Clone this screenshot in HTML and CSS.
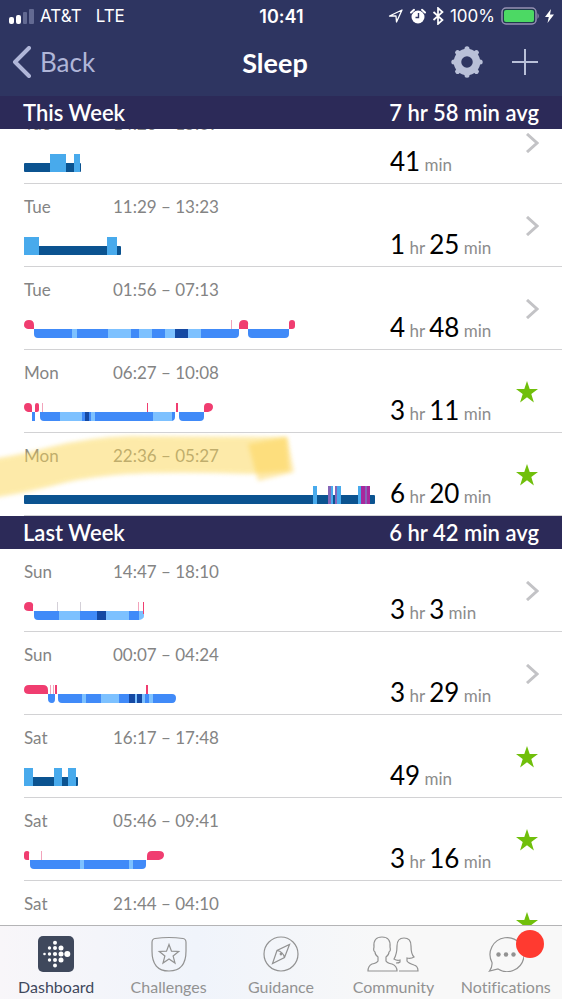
FILE: index.html
```html
<!DOCTYPE html>
<html lang="en">
<head>
    <meta charset="UTF-8">
    <meta name="viewport" content="width=device-width, initial-scale=1.0">
    <title>Sleep</title>
    <link rel="stylesheet" href="styles.css">
</head>
<body>

    <header class="top">
        <div class="status-bar">
            <div class="status-left">
                <svg class="signal" width="25" height="15" viewBox="0 0 25 15">
                    <rect x="0" y="8" width="5" height="7" rx="2"/>
                    <rect x="7" y="6" width="5" height="9" rx="2"/>
                    <rect class="off" x="14" y="3" width="4" height="12" rx="1"/>
                    <rect class="off" x="20" y="0" width="5" height="15" rx="1"/>
                </svg>
                <span>AT&amp;T</span>
                <span class="network">LTE</span>
            </div>
            <div class="clock">10:41</div>
            <div class="status-right">
                <svg width="16" height="16" viewBox="0 0 16 16"><path d="M1.500 8 14 2 8.500 14 8 8z" fill="none" stroke="#fff" stroke-width="1.300" stroke-linejoin="round"/></svg>
                <svg class="alarm" width="16" height="16" viewBox="0 0 16 16">
                    <circle cx="8" cy="9" r="6.500" fill="#fff"/>
                    <path d="M1 4.500 4 1.800M15 4.500 12 1.800" stroke="#fff" stroke-width="2" stroke-linecap="round"/>
                    <path d="M8.500 5V9.500H5.500" fill="none" stroke="#2e3561" stroke-width="1.400"/>
                </svg>
                <svg width="12" height="18" viewBox="0 0 12 18"><path d="M1.500 5 10.500 13 6 17V1l4.500 4-9 8" fill="none" stroke="#fff" stroke-width="1.700"/></svg>
                <span>100%</span>
                <svg class="battery" width="38" height="18" viewBox="0 0 38 18">
                    <rect x="1" y="1" width="34" height="16" rx="4" fill="#1f3a4d" stroke="#9690b4" stroke-width="1.500"/>
                    <rect x="3" y="3" width="30" height="12" rx="2" fill="#4cd964"/>
                    <path d="M36.500 6q2.500 3 0 6z" fill="#9690b4"/>
                </svg>
                <svg width="9" height="14" viewBox="0 0 9 14"><path d="M6 0 0 8h3.800L2.500 14 9 5.500H5z" fill="#fff"/></svg>
            </div>
        </div>
        <nav class="nav-bar">
            <a class="back" href="#">
                <svg width="20" height="32" viewBox="0 0 20 32"><path d="M18 2 4 16 18 30" fill="none" stroke="currentColor" stroke-width="4" stroke-linecap="round" stroke-linejoin="round"/></svg>
                Back
            </a>
            <h1>Sleep</h1>
            <div class="actions">
                <button type="button" aria-label="Settings">
                    <svg width="32" height="32" viewBox="0 0 32 32">
                        <circle cx="16" cy="16" r="9.500" fill="none" stroke="currentColor" stroke-width="7.500"/>
                        <g stroke="currentColor" stroke-width="5" stroke-linecap="round">
                            <path d="M16 4V2.800M16 28v1.200M4 16H2.800M28 16h1.200M7.500 7.500l-.900-.900M24.500 24.500l.9.9M7.500 24.500l-.9.9M24.500 7.500l.9-.9"/>
                        </g>
                    </svg>
                </button>
                <button type="button" aria-label="Add">
                    <svg width="28" height="28" viewBox="0 0 28 28"><path d="M14 1v26M1 14h26" stroke="currentColor" stroke-width="2"/></svg>
                </button>
            </div>
        </nav>
    </header>

    <main class="log">
        <h2 class="week pinned"><span>This Week</span><span>7 hr 58 min avg</span></h2>
        <ul class="sessions scrolled">
            <li class="session">
                <a href="#">
                    <span class="day">Tue</span>
                    <span class="time">14:26 – 15:09</span>
                    <svg class="chart" width="351" height="18" viewBox="0 0 351 18">
                        <rect class="asleep" y="9" width="57" height="9" rx="1"/>
                        <path class="restless" d="M26 0h16v18H26zM50 0h6v18h-6z"/>
                    </svg>
                    <span class="duration"><b>41</b> min</span>
                    <svg class="arrow" width="14" height="20" viewBox="0 0 14 20"><path d="M2 1 12 10 2 19"/></svg>
                </a>
            </li>
            <li class="session">
                <a href="#">
                    <span class="day">Tue</span>
                    <span class="time">11:29 – 13:23</span>
                    <svg class="chart" width="351" height="18" viewBox="0 0 351 18">
                        <rect class="asleep" y="9" width="97" height="9" rx="1"/>
                        <path class="restless" d="M0 0h15v18H0zM83 0h10v18H83z"/>
                    </svg>
                    <span class="duration"><b>1</b> hr <b>25</b> min</span>
                    <svg class="arrow" width="14" height="20" viewBox="0 0 14 20"><path d="M2 1 12 10 2 19"/></svg>
                </a>
            </li>
            <li class="session">
                <a href="#">
                    <span class="day">Tue</span>
                    <span class="time">01:56 – 07:13</span>
                    <svg class="chart" width="351" height="18" viewBox="0 0 351 18">
                        <path class="light" d="M10 9h205v5q0 4-4 4H14q-4 0-4-4zM224 9h41v5q0 4-4 4h-33q-4 0-4-4z"/>
                        <path class="rem" d="M48 9h5v9h-5zM84 9h23v9H84zM115 9h13v9h-13zM141 9h36v9h-36z"/>
                        <path class="deep" d="M151 9h13v9h-13z"/>
                        <path class="wake" d="M10 9H4Q0 8 0 5q0-5 5-5t5 5zM215 9V5q0-5 5-5t4 5v4zM265 9V3q0-3 3-3t3 3v3q0 3-3 3z"/>
                        <path class="blip" d="M207 0h1v9h-1z"/>
                    </svg>
                    <span class="duration"><b>4</b> hr <b>48</b> min</span>
                    <svg class="arrow" width="14" height="20" viewBox="0 0 14 20"><path d="M2 1 12 10 2 19"/></svg>
                </a>
            </li>
            <li class="session">
                <a href="#">
                    <span class="day">Mon</span>
                    <span class="time">06:27 – 10:08</span>
                    <svg class="chart" width="351" height="18" viewBox="0 0 351 18">
                        <path class="light" d="M8 9h3v9H8zM16 9h135v5q0 4-4 4H20q-4 0-4-4zM155 9h25v5q0 4-4 4h-17q-4 0-4-4z"/>
                        <path class="rem" d="M36 9h35v9H36zM129 9h19v9h-19z"/>
                        <path class="light" d="M58 9h9v9h-9z"/>
                        <path class="deep" d="M61 9h4v9h-4z"/>
                        <path class="wake" d="M8 9H4Q0 8 0 4t4-4 4 4zM11 9V2q0-2 2-2t2 2v5q0 2-2 2zM152 0h2v9h-2zM180 9V4q0-4 4-4 5 0 5 4t-5 5zM123 0h1v9h-1z"/>
                        <path class="blip" d="M18 0h1v9h-1z"/>
                    </svg>
                    <span class="duration"><b>3</b> hr <b>11</b> min</span>
                    <svg class="star" width="24" height="24" viewBox="0 0 24 24"><path d="m12 1 2.700 8H23l-6.700 5 2.600 8.500-6.900-5.200-6.900 5.200L7.700 14 1 9h8.300z"/></svg>
                </a>
            </li>
            <li class="session">
                <a href="#">
                    <span class="day">Mon</span>
                    <span class="time">22:36 – 05:27</span>
                    <svg class="chart" width="351" height="18" viewBox="0 0 351 18">
                        <rect class="asleep" y="9" width="351" height="9" rx="1"/>
                        <path class="restless" d="M289 0h4v18h-4zM304 0h5v18h-5zM311 0h6v18h-6zM334 0h12v18h-12z"/>
                        <path class="mixed" d="M304 0h3v18h-3zM311 0h2v18h-2zM341 0h2v18h-2z"/>
                        <path class="awake" d="M337 0h4v18h-4zM343 0h3v18h-3z"/>
                    </svg>
                    <span class="duration"><b>6</b> hr <b>20</b> min</span>
                    <svg class="star" width="24" height="24" viewBox="0 0 24 24"><path d="m12 1 2.700 8H23l-6.700 5 2.600 8.500-6.900-5.200-6.900 5.200L7.700 14 1 9h8.300z"/></svg>
                </a>
                <svg class="marker" width="300" height="70" viewBox="0 0 300 70">
                    <path class="stroke" d="M-8 26Q20 22 50 14 90 4 130 3L287 4 289 38 250 41Q160 38 115 42 80 45 48 54 20 61-8 65z"/>
                    <path class="tip" d="m248 11 39-7 7 35-36 9z"/>
                </svg>
            </li>
        </ul>

        <h2 class="week"><span>Last Week</span><span>6 hr 42 min avg</span></h2>
        <ul class="sessions">
            <li class="session">
                <a href="#">
                    <span class="day">Sun</span>
                    <span class="time">14:47 – 18:10</span>
                    <svg class="chart" width="351" height="18" viewBox="0 0 351 18">
                        <path class="light" d="M10 9h105v9H14q-4 0-4-4z"/>
                        <path class="rem" d="M35 9h21v9H35zM82 9h23v9H82zM115 9h5v5q0 3-5 4z"/>
                        <path class="deep" d="M73 9h9v9h-9z"/>
                        <path class="wake" d="M9 9H5Q0 9 0 5q0-5 5-5t4 5zM119 0h1v12h-1z"/>
                        <path class="blip" d="M114 0h1v9h-1z"/>
                        <path class="faint" d="M33 0h1v9h-1zM56 0h1v9h-1z"/>
                    </svg>
                    <span class="duration"><b>3</b> hr <b>3</b> min</span>
                    <svg class="arrow" width="14" height="20" viewBox="0 0 14 20"><path d="M2 1 12 10 2 19"/></svg>
                </a>
            </li>
            <li class="session">
                <a href="#">
                    <span class="day">Sun</span>
                    <span class="time">00:07 – 04:24</span>
                    <svg class="chart" width="351" height="18" viewBox="0 0 351 18">
                        <path class="light" d="M24 9h7v5q0 4-3 4-4 0-4-4zM34 9h114q4 0 4 4 0 5-4 5H38q-4 0-4-4z"/>
                        <path class="rem" d="M58 9h4v9h-4zM77 9h18v9H77zM111 9h18v9h-18z"/>
                        <path class="light" d="M121 9h4v9h-4z"/>
                        <path class="deep" d="M105 9h6v9h-6zM113 9h5v9h-5z"/>
                        <path class="wake" d="M24 9H5Q0 9 0 5q0-5 5-5h14q5 0 5 5zM31 0h2v9h-2zM122 0h2v9h-2z"/>
                        <path class="blip" d="M26 0h1v9h-1zM29 0h1v9h-1z"/>
                    </svg>
                    <span class="duration"><b>3</b> hr <b>29</b> min</span>
                    <svg class="arrow" width="14" height="20" viewBox="0 0 14 20"><path d="M2 1 12 10 2 19"/></svg>
                </a>
            </li>
            <li class="session">
                <a href="#">
                    <span class="day">Sat</span>
                    <span class="time">16:17 – 17:48</span>
                    <svg class="chart" width="351" height="18" viewBox="0 0 351 18">
                        <rect class="asleep" y="9" width="54" height="9" rx="1"/>
                        <path class="restless" d="M0 0h9v18H0zM30 0h8v18h-8zM44 0h8v18h-8z"/>
                    </svg>
                    <span class="duration"><b>49</b> min</span>
                    <svg class="star" width="24" height="24" viewBox="0 0 24 24"><path d="m12 1 2.700 8H23l-6.700 5 2.600 8.500-6.900-5.200-6.900 5.200L7.700 14 1 9h8.300z"/></svg>
                </a>
            </li>
            <li class="session">
                <a href="#">
                    <span class="day">Sat</span>
                    <span class="time">05:46 – 09:41</span>
                    <svg class="chart" width="351" height="18" viewBox="0 0 351 18">
                        <path class="light" d="M6 9h116v5q0 4-4 4H10q-4 0-4-4z"/>
                        <path class="rem" d="M56 9h4v9h-4zM105 9h4v9h-4z"/>
                        <path class="wake" d="M5 9H3Q0 9 0 6V3q0-3 3-3t2 3zM123 9V5q0-5 5-5h7q5 0 5 4t-5 5z"/>
                        <path class="blip" d="M17 0h1v9h-1z"/>
                    </svg>
                    <span class="duration"><b>3</b> hr <b>16</b> min</span>
                    <svg class="star" width="24" height="24" viewBox="0 0 24 24"><path d="m12 1 2.700 8H23l-6.700 5 2.600 8.500-6.900-5.200-6.900 5.200L7.700 14 1 9h8.300z"/></svg>
                </a>
            </li>
            <li class="session">
                <a href="#">
                    <span class="day">Sat</span>
                    <span class="time">21:44 – 04:10</span>
                    <svg class="star" width="24" height="24" viewBox="0 0 24 24"><path d="m12 1 2.700 8H23l-6.700 5 2.600 8.500-6.900-5.200-6.900 5.200L7.700 14 1 9h8.300z"/></svg>
                </a>
            </li>
        </ul>
    </main>

    <nav class="tab-bar">
        <a class="tab active" href="#">
            <svg width="36" height="36" viewBox="0 0 36 36">
                <rect width="36" height="36" rx="5" fill="#3f485c"/>
                <g fill="#fff">
                    <circle cx="6.500" cy="18" r="1.300"/>
                    <circle cx="11.500" cy="12" r="1.700"/><circle cx="11.500" cy="18" r="1.700"/><circle cx="11.500" cy="24" r="1.700"/>
                    <circle cx="17" cy="6.800" r="2"/><circle cx="17" cy="12" r="2"/><circle cx="17" cy="18" r="2.100"/><circle cx="17" cy="24" r="2"/><circle cx="17" cy="29.500" r="2"/>
                    <circle cx="23" cy="12" r="2.500"/><circle cx="23" cy="18" r="2.500"/><circle cx="23" cy="24" r="2.500"/>
                    <circle cx="29.300" cy="18" r="3"/>
                </g>
            </svg>
            Dashboard
        </a>
        <a class="tab" href="#">
            <svg class="line" width="36" height="36" viewBox="0 0 36 36">
                <path d="M4 2.500Q18 .500 32 2.500 35 3 35 6.500V15Q35 35 18 35T1 15V6.500Q1 3 4 2.500z"/>
                <path d="m18 8.500 2.500 6.700 7.200.3-5.600 4.500 1.900 7-6-4-6 4 1.900-7-5.600-4.500 7.200-.3z"/>
            </svg>
            Challenges
        </a>
        <a class="tab" href="#">
            <svg class="line" width="36" height="36" viewBox="0 0 36 36">
                <circle cx="18" cy="18" r="17"/>
                <path d="M26.500 8.500 21.500 21.500 9.500 27.500 14 14.500zM14 14.500q6 1 7.500 7"/>
                <circle cx="18" cy="18" r=".800"/>
            </svg>
            Guidance
        </a>
        <a class="tab" href="#">
            <svg class="line" width="52" height="36" viewBox="0 0 52 36">
                <path d="M11 25v-4Q8 19 8 16 6 15 7 11 6 1 15 1t8 10q1 4-1 5 0 3-3 5v4q1 2 6 3 5 2 5 7H1q0-5 4-7 5-1 6-3z"/>
                <path d="M32 35h19q0-5-4-6-6-2-7-4v-3q4 1 7-1-3-3-3-11Q44 2 37 2t-7 8q0 8-3 13 3 2 6 1v2q-1 1-4 1"/>
            </svg>
            Community
        </a>
        <a class="tab" href="#">
            <svg class="line" width="36" height="36" viewBox="0 0 36 36">
                <path d="M4 26.500A17 17 0 1 1 10 33L1.500 35Q4.500 31 4 26.500z"/>
                <g fill="#929292" stroke="none"><circle cx="10.500" cy="18.500" r="2.200"/><circle cx="18" cy="18.500" r="2.200"/><circle cx="25.500" cy="18.500" r="2.200"/></g>
            </svg>
            Notifications
            <i class="badge"></i>
        </a>
    </nav>

</body>
</html>
```
FILE: styles.css
```css
* {
    box-sizing: border-box;
}
body {
    margin: 0;
    height: 100vh;
    display: flex;
    flex-direction: column;
    overflow: hidden;
    font-family: Lato, "Open Sans", sans-serif;
    font-variant-ligatures: none;
    background: #fff;
    color: #000;
}
a {
    color: inherit;
    text-decoration: none;
}
svg {
    display: block;
    flex: none;
}

/* status bar + title */
.top {
    flex: none;
    background: #2e3561;
    color: #fff;
}
.status-bar {
    display: grid;
    grid-template-columns: 1fr auto 1fr;
    align-items: center;
    height: 32px;
    padding: 0 8px 0 9px;
    font-family: Inter, sans-serif;
    font-size: 17px;
}
.status-left, .status-right {
    display: flex;
    align-items: center;
    gap: 6px;
}
.status-right {
    justify-content: flex-end;
}
.network {
    margin-left: 8px;
}
.clock {
    font-size: 18px;
    font-weight: 600;
}
.signal {
    fill: #fff;
}
.signal .off {
    fill: #636a92;
}
.nav-bar {
    display: grid;
    grid-template-columns: 1fr auto 1fr;
    align-items: center;
    height: 64px;
    padding: 0 23px 4px 11px;
}
.nav-bar h1 {
    margin: 0;
    font-size: 27px;
    font-weight: 700;
}
.back {
    display: flex;
    align-items: center;
    gap: 9px;
    font-size: 26px;
    color: #b0b6d8;
}
.actions {
    display: flex;
    align-items: center;
    justify-content: flex-end;
    gap: 28px;
}
.actions button {
    padding: 0;
    border: none;
    background: none;
    color: #b9c0d8;
    cursor: pointer;
}

/* sleep log */
.log {
    flex: 1;
    min-height: 0;
    overflow: hidden;
}
.week {
    display: flex;
    justify-content: space-between;
    align-items: center;
    height: 33px;
    margin: 0;
    padding: 0 23px;
    background: #2c2a58;
    color: #fff;
    font-size: 22px;
    font-weight: 600;
}
.pinned {
    position: sticky;
    top: 0;
    z-index: 1;
}
.sessions {
    margin: 0;
    padding: 0;
    list-style: none;
}
.scrolled {
    margin-top: -28px;
}
.session {
    position: relative;
    padding-left: 24px;
}
.session a {
    display: grid;
    grid-template-columns: 89px 1fr 125px 24px;
    grid-template-rows: 20px 43px;
    height: 83px;
    padding: 13px 23px 6px 0;
    border-bottom: 1px solid #d2d2d4;
}
.day, .time {
    font-size: 17px;
    line-height: 20px;
    color: #848484;
}
.chart {
    grid-column: 1 / 3;
    grid-row: 2;
    align-self: end;
    margin-bottom: 5px;
    max-width: 100%;
}
.duration {
    grid-column: 3;
    grid-row: 2;
    align-self: end;
    font-size: 17px;
    line-height: 24px;
    white-space: nowrap;
    color: #8c8c8c;
}
.duration b {
    font-size: 26px;
    font-weight: 400;
    color: #000;
}
.arrow, .star {
    grid-column: 4;
    grid-row: 1 / 3;
    align-self: center;
    justify-self: end;
    margin-bottom: 6px;
}
.arrow {
    fill: none;
    stroke: #c3c3c6;
    stroke-width: 3;
}
.star {
    fill: #70bf0b;
}

/* chart colours */
.asleep {
    fill: #0b5390;
}
.restless {
    fill: #48aaec;
}
.awake {
    fill: #a8289c;
}
.mixed {
    fill: #8565b8;
}
.light {
    fill: #408af8;
}
.rem {
    fill: #7dc1ff;
}
.deep {
    fill: #1549a3;
}
.wake {
    fill: #f03d70;
}
.blip {
    fill: #f2a3bb;
}
.faint {
    fill: #d4d0d8;
}

/* highlighter stroke */
.marker {
    position: absolute;
    left: 0;
    top: 0;
    pointer-events: none;
}
.marker path {
    filter: blur(2px);
}
.marker .stroke {
    fill: #fcd755;
    opacity: 0.5;
}
.marker .tip {
    fill: #fdd04a;
    opacity: 0.45;
}

/* bottom tabs */
.tab-bar {
    flex: none;
    display: flex;
    height: 74px;
    border-top: 1px solid #b4b4b6;
    background: linear-gradient(90deg, #f8f6f9, #f0f4fb 35%, #f8f8f8 70%);
}
.tab {
    position: relative;
    flex: 1 1 0;
    display: flex;
    flex-direction: column;
    align-items: center;
    gap: 5px;
    padding-top: 10px;
    font-size: 16px;
    line-height: 20px;
    color: #929292;
}
.tab.active {
    color: #3f485c;
}
.line {
    fill: none;
    stroke: #929292;
    stroke-width: 1.2;
}
.badge {
    position: absolute;
    top: 4px;
    left: calc(50% + 10px);
    width: 28px;
    height: 28px;
    border-radius: 50%;
    background: #ff3a30;
}
```
